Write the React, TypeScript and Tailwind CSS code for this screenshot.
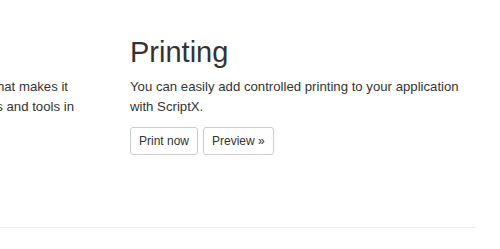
import React from 'react';

export default function App() {
  return (
    <div className="w-[500px] h-[249px] overflow-hidden bg-white text-[#333] text-[13.2px] leading-[20px] font-['Liberation_Sans',Arial,sans-serif]">
      <div className="flex pt-[36px]">
        <div className="w-[100px] shrink-0 overflow-hidden pt-[41px]">
          <div className="flex justify-end pr-[32px]">
            <span className="shrink-0 whitespace-nowrap">what makes it</span>
          </div>
          <div className="flex justify-end pr-[26px]">
            <span className="shrink-0 whitespace-nowrap">libraries and tools in</span>
          </div>
        </div>
        <div className="ml-[30px] w-[340px] shrink-0">
          <h2 className="text-[29px] leading-[33px] font-normal mb-[8px]">Printing</h2>
          <p className="mb-[10px]">
            You can easily add controlled printing to your application with ScriptX.
          </p>
          <div className="flex gap-[5px]">
            <button className="h-[28px] px-[8px] text-[12px] leading-[18px] border border-[#ccc] rounded-[3px] bg-white text-[#333]">
              Print now
            </button>
            <button className="h-[28px] px-[8px] text-[12px] leading-[18px] border border-[#ccc] rounded-[3px] bg-white text-[#333]">
              Preview &raquo;
            </button>
          </div>
        </div>
      </div>
      <hr className="mt-[72px] w-[477px] border-0 border-t border-[#eee]" />
    </div>
  );
}
